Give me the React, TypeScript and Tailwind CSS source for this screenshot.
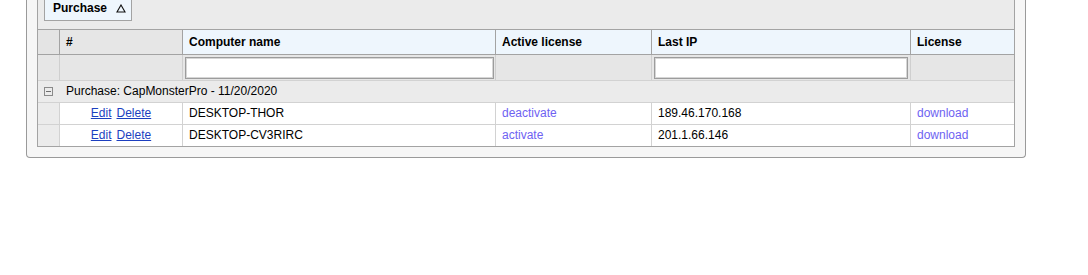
import React from "react";

const COLS = ["w-[21px]", "w-[123px]", "w-[313px]", "w-[156px]", "w-[259px]", "w-[104px]"];

const rows = [
  { name: "DESKTOP-THOR", active: "deactivate", ip: "189.46.170.168" },
  { name: "DESKTOP-CV3RIRC", active: "activate", ip: "201.1.66.146" },
];

function HeaderRow() {
  const cell = "h-[24px] flex items-center px-[6px] font-bold text-black border-l border-[#a3a3a3]";
  return (
    <div className="flex border-b border-[#a3a3a3]">
      <div className={`${COLS[0]} h-[24px] bg-[#e4e4e4]`} />
      <div className={`${COLS[1]} ${cell} bg-[#e6e6e6]`}>#</div>
      <div className={`${COLS[2]} ${cell} bg-[#eef6fd]`}>Computer name</div>
      <div className={`${COLS[3]} ${cell} bg-[#eef6fd]`}>Active license</div>
      <div className={`${COLS[4]} ${cell} bg-[#eef6fd]`}>Last IP</div>
      <div className={`${COLS[5]} ${cell} bg-[#eef6fd]`}>License</div>
    </div>
  );
}

function FilterRow() {
  const cell = "h-[25px] border-l border-[#cfcfcf]";
  const input =
    "block w-full h-[22px] bg-white border border-[#9c9c9c] shadow-[inset_0_0_0_1px_#d6d6d6] outline-none";
  return (
    <div className="flex bg-[#e6e6e6] border-b border-[#d2d2d2]">
      <div className={`${COLS[0]} h-[25px]`} />
      <div className={`${COLS[1]} ${cell}`} />
      <div className={`${COLS[2]} ${cell} pl-[2px] pr-[1px] pt-[2px]`}>
        <input className={input} />
      </div>
      <div className={`${COLS[3]} ${cell}`} />
      <div className={`${COLS[4]} ${cell} pl-[2px] pr-[2px] pt-[2px]`}>
        <input className={input} />
      </div>
      <div className={`${COLS[5]} ${cell}`} />
    </div>
  );
}

function GroupRow() {
  return (
    <div className="flex h-[22px] items-center bg-[#ebebeb] border-b border-[#d2d2d2]">
      <div className={`${COLS[0]} flex items-center pl-[6px]`}>
        <span className="relative flex h-[9px] w-[9px] items-center justify-center border border-[#8a8a8a]">
          <span className="h-px w-[5px] bg-[#6e6e6e]" />
        </span>
      </div>
      <div className="pl-[7px] text-black">Purchase: CapMonsterPro - 11/20/2020</div>
    </div>
  );
}

function DataRow({ r, last }: { r: (typeof rows)[number]; last: boolean }) {
  const cell = "h-[21px] flex items-center px-[6px] bg-white border-l border-[#d2d2d2]";
  return (
    <div className={`flex ${last ? "" : "border-b border-[#d2d2d2]"}`}>
      <div className={`${COLS[0]} h-[21px] bg-[#ebebeb]`} />
      <div className={`${COLS[1]} ${cell} justify-center gap-[5px]`}>
        <a href="#" className="text-[#1c3fbf] underline">Edit</a>
        <a href="#" className="text-[#1c3fbf] underline">Delete</a>
      </div>
      <div className={`${COLS[2]} ${cell} text-black`}>{r.name}</div>
      <div className={`${COLS[3]} ${cell}`}>
        <a href="#" className="text-[#6e62f2]">{r.active}</a>
      </div>
      <div className={`${COLS[4]} ${cell} text-black`}>{r.ip}</div>
      <div className={`${COLS[5]} ${cell}`}>
        <a href="#" className="text-[#6e62f2]">download</a>
      </div>
    </div>
  );
}

export default function App() {
  return (
    <div className="w-[1088px] h-[275px] bg-white text-[12px] leading-[15px] font-['Liberation_Sans',Arial,sans-serif] overflow-hidden">
      <div className="ml-[26px] w-[1000px] border border-t-0 border-[#9a9a9a] rounded-b-[4px] bg-[#f6f6f6] px-[10px] pb-[10px]">
        <div className="w-[978px] border border-t-0 border-[#a3a3a3] bg-[#ebebeb]">
          <div className="h-[30px] pl-[6px] border-b border-[#a3a3a3]">
            <div className="flex h-[21px] w-[88px] items-start gap-[9px] pl-[8px] pt-[1px] border border-t-0 border-[#a3a3a3] bg-[#eef6fd] font-bold text-black">
              <span>Purchase</span>
              <svg width="10" height="9" viewBox="0 0 10 9" className="mt-[3px]">
                <polygon points="5,1 9,8 1,8" fill="none" stroke="#111" strokeWidth="1.1" />
              </svg>
            </div>
          </div>
          <HeaderRow />
          <FilterRow />
          <GroupRow />
          {rows.map((r, i) => (
            <DataRow key={r.name} r={r} last={i === rows.length - 1} />
          ))}
        </div>
      </div>
    </div>
  );
}
